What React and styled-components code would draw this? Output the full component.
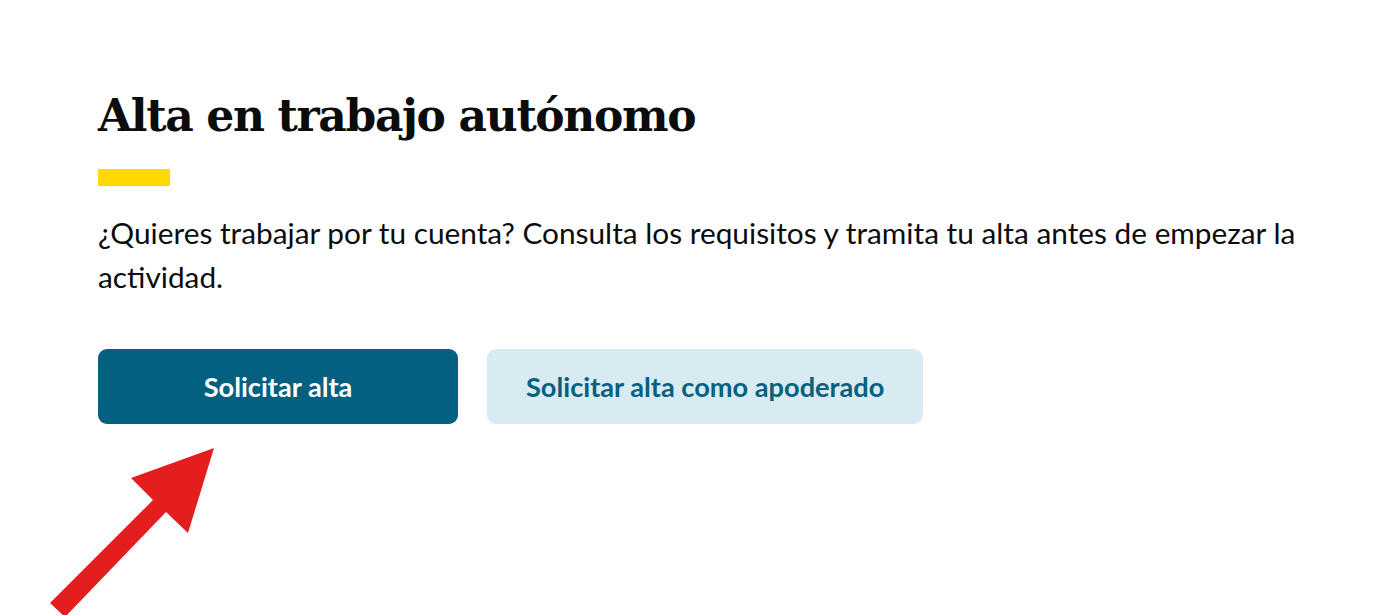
import React from "react";
import styled, { createGlobalStyle } from "styled-components";

const GlobalStyle = createGlobalStyle`
  html, body { margin: 0; padding: 0; background: #ffffff; }
  body { font-family: "Lato", "Liberation Sans", sans-serif; color: #0b0c0c; }
  * { box-sizing: border-box; }
`;

const Page = styled.main`
  position: relative;
  width: 1380px;
  height: 615px;
  overflow: hidden;
  padding: 84px 0 0 98px;
`;

const Content = styled.section`
  width: 1220px;
  display: flex;
  flex-direction: column;
  align-items: flex-start;
`;

const Title = styled.h1`
  margin: 0;
  font-family: "DejaVu Serif", "Liberation Serif", serif;
  font-weight: 700;
  font-size: 44px;
  line-height: 64px;
  letter-spacing: -1.35px;
  color: #0b0c0c;
`;

const Accent = styled.div`
  width: 72px;
  height: 17px;
  background: #ffd900;
  margin-top: 21px;
`;

const Lead = styled.p`
  margin: 25px 0 0;
  font-family: "Lato", sans-serif;
  font-size: 29.8px;
  line-height: 44px;
  color: #0b0c0c;
`;

const Actions = styled.div`
  display: flex;
  gap: 29px;
  margin-top: 50px;
`;

const Button = styled.button`
  height: 75px;
  min-width: ${(p) => (p.$primary ? "360px" : "auto")};
  padding: 0 39px;
  border: none;
  border-radius: 9px;
  font-family: "Lato", sans-serif;
  font-weight: 700;
  font-size: 27.2px;
  cursor: pointer;
  background: ${(p) => (p.$primary ? "#03607f" : "#d9ebf2")};
  color: ${(p) => (p.$primary ? "#ffffff" : "#04607f")};
`;

const Arrow = styled.svg`
  position: absolute;
  left: 0;
  top: 0;
  width: 1380px;
  height: 615px;
  pointer-events: none;
`;

export default function App() {
  return (
    <>
      <GlobalStyle />
      <Page>
        <Content>
          <Title>Alta en trabajo autónomo</Title>
          <Accent />
          <Lead>
            ¿Quieres trabajar por tu cuenta? Consulta los requisitos y tramita tu alta antes de empezar la actividad.
          </Lead>
          <Actions>
            <Button $primary>Solicitar alta</Button>
            <Button>Solicitar alta como apoderado</Button>
          </Actions>
        </Content>
        <Arrow viewBox="0 0 1380 615">
          <polygon
            points="214,448 188,533 166,512 65,617 50,603 153,500 131,478"
            fill="#e41e1f"
          />
        </Arrow>
      </Page>
    </>
  );
}
